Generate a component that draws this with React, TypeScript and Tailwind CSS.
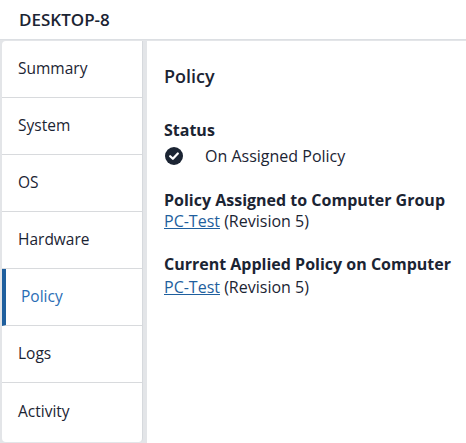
import React from "react";

const tabs = ["Summary", "System", "OS", "Hardware", "Policy", "Logs", "Activity"];

export default function App() {
  return (
    <div className="w-[466px] h-[443px] overflow-hidden bg-[#e3e5e8] text-[#1b2433]" style={{ fontFamily: '"Open Sans", sans-serif' }}>
      <div className="h-[40px] bg-white pl-[19px] flex items-center text-[17px] font-semibold border-b border-[#dcdfe3]">DESKTOP-8</div>
      <div className="flex pl-[2px] pt-[1px] gap-[4px] h-[403px]">
        <div className="w-[141px] h-[401px] bg-white rounded-b-[4px] rounded-tl-[4px] border-r border-[#d6d9dd] flex flex-col">
          {tabs.map((t, i) => (
            <div key={t} className={`h-[57px] shrink-0 flex items-center text-[15.5px] ${i < tabs.length - 1 ? "border-b border-[#d8dadd]" : ""} ${t === "Policy" ? "border-l-[4px] border-l-[#1f5f9e] pl-[15px] text-[#2a6db5]" : "pl-[16px]"}`}>
              {t}
            </div>
          ))}
        </div>
        <div className="flex-1 bg-white pl-[17px] pt-[22px] text-[16px]">
          <div className="text-[18px] font-semibold leading-[26px]">Policy</div>
          <div className="mt-[30px] font-bold leading-[22px]">Status</div>
          <div className="flex items-center leading-[22px] mt-[4px]">
            <svg width="18" height="18" viewBox="0 0 16 16" className="ml-[1px]">
              <circle cx="8" cy="8" r="8" fill="#1b2433" />
              <path d="M4.6 8.2 L7 10.5 L11.4 5.8" stroke="white" strokeWidth="2" fill="none" strokeLinecap="round" strokeLinejoin="round" />
            </svg>
            <span className="ml-[22px]">On Assigned Policy</span>
          </div>
          <div className="mt-[22px] font-bold leading-[22px]">Policy Assigned to Computer Group</div>
          <div className="leading-[20px]"><span className="text-[#1f5f9e] underline">PC-Test</span> (Revision 5)</div>
          <div className="mt-[22px] font-bold leading-[22px]">Current Applied Policy on Computer</div>
          <div className="leading-[24px]"><span className="text-[#1f5f9e] underline">PC-Test</span> (Revision 5)</div>
        </div>
      </div>
    </div>
  );
}
